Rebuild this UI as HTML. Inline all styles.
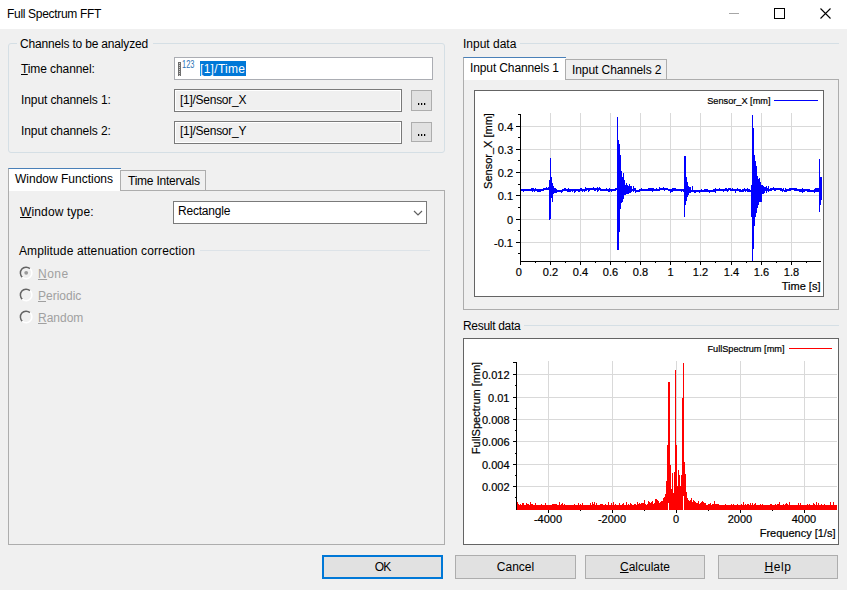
<!DOCTYPE html>
<html><head><meta charset="utf-8">
<style>
html,body{margin:0;padding:0;}
body{width:847px;height:590px;overflow:hidden;position:relative;background:#f0f0f0;font-family:"Liberation Sans",sans-serif;font-size:12px;color:#000;}
.a{position:absolute;box-sizing:border-box;}
.t{position:absolute;white-space:nowrap;font-size:12px;line-height:14px;}
.u{text-decoration:underline;text-underline-offset:1px;}
.dis{color:#a0a0a0;}
.btn{position:absolute;box-sizing:border-box;background:#e1e1e1;border:1px solid #adadad;}
.cl{font-family:"Liberation Sans",sans-serif;font-size:11px;fill:#000;stroke:#000;stroke-width:0.2px;}
.lg{font-family:"Liberation Sans",sans-serif;font-size:9.2px;fill:#000;stroke:#000;stroke-width:0.2px;}
svg{position:absolute;left:0;top:0;}
</style></head><body>
<!-- title bar -->
<div class="a" style="left:0;top:0;width:847px;height:29px;background:#fff;"></div>
<div class="t" style="left:7px;top:7px;letter-spacing:-0.31px">Full Spectrum FFT</div>
<div class="a" style="left:729px;top:13px;width:10px;height:1px;background:#a6a6a6;"></div>
<div class="a" style="left:774px;top:8px;width:11px;height:11px;border:1px solid #000;"></div>
<svg width="847" height="30" style="left:0;top:0"><path d="M820.5 8.5L830.5 18.5M830.5 8.5L820.5 18.5" stroke="#000" stroke-width="1.1" fill="none"/></svg>

<!-- group box 1 -->
<div class="a" style="left:8px;top:43px;width:437px;height:110px;border:1px solid #d5dfe5;border-radius:3px;"></div>
<div class="a" style="left:17px;top:38px;width:136px;height:10px;background:#f0f0f0;"></div>
<div class="t" style="left:20px;top:37px;letter-spacing:-0.18px">Channels to be analyzed</div>
<div class="t" style="left:21px;top:62px;letter-spacing:-0.09px"><span class="u">T</span>ime channel:</div>
<div class="t" style="left:21px;top:93px;letter-spacing:-0.1px">Input channels 1:</div>
<div class="t" style="left:21px;top:124px;letter-spacing:-0.1px">Input channels 2:</div>

<div class="a" style="left:174px;top:57px;width:259px;height:23px;background:#fff;border:1px solid #abadb3;"></div>
<div class="a" style="left:200px;top:61px;width:46px;height:15px;background:#0078d7;"></div>
<div class="t" style="left:200px;top:62px;color:#fff;letter-spacing:0.3px">[1]/Time</div>
<svg width="200" height="80" style="left:0;top:0">
<rect x="178" y="62" width="3" height="14" fill="#6e6e6e"/>
<path d="M179 63.5H180M179 65.5H180M179 67.5H180M179 69.5H180M179 71.5H180M179 73.5H180M179 75.5H180" stroke="#d0d0d0" stroke-width="1"/>
<text x="182" y="68" textLength="12.4" lengthAdjust="spacingAndGlyphs" style="font-family:'Liberation Sans';font-size:10.1px;fill:#2f74b5">123</text>
</svg>

<div class="a" style="left:174px;top:89px;width:228px;height:23px;background:#f0f0f0;border:1px solid #7a7a7a;box-shadow:inset 0 0 0 1px #fff;"></div>
<div class="t" style="left:180px;top:93px;letter-spacing:-0.27px">[1]/Sensor_X</div>
<div class="btn" style="left:411px;top:90px;width:21px;height:21px;"></div>
<div class="a" style="left:418px;top:103px;width:1px;height:2px;background:#000;box-shadow:1px 0 0 #a8a8a8;"></div>
<div class="a" style="left:421px;top:103px;width:1px;height:2px;background:#000;box-shadow:1px 0 0 #a8a8a8;"></div>
<div class="a" style="left:424px;top:103px;width:1px;height:2px;background:#000;box-shadow:1px 0 0 #a8a8a8;"></div>

<div class="a" style="left:174px;top:121px;width:228px;height:23px;background:#f0f0f0;border:1px solid #7a7a7a;box-shadow:inset 0 0 0 1px #fff;"></div>
<div class="t" style="left:180px;top:124px;letter-spacing:-0.27px">[1]/Sensor_Y</div>
<div class="btn" style="left:411px;top:122px;width:21px;height:20px;"></div>
<div class="a" style="left:418px;top:134px;width:1px;height:2px;background:#000;box-shadow:1px 0 0 #a8a8a8;"></div>
<div class="a" style="left:421px;top:134px;width:1px;height:2px;background:#000;box-shadow:1px 0 0 #a8a8a8;"></div>
<div class="a" style="left:424px;top:134px;width:1px;height:2px;background:#000;box-shadow:1px 0 0 #a8a8a8;"></div>

<!-- left tab control -->
<div class="a" style="left:8px;top:190px;width:437px;height:355px;border:1px solid #adadad;"></div>
<div class="a" style="left:8px;top:168px;width:113px;height:23px;border-left:1px solid #adadad;border-top:1px solid #4a80b8;background:#fff;"></div>
<div class="a" style="left:120px;top:170px;width:86px;height:21px;border:1px solid #adadad;background:#f0f0f0;"></div>
<div class="t" style="left:15px;top:172px;">Window Functions</div>
<div class="t" style="left:128px;top:174px;letter-spacing:-0.23px">Time Intervals</div>

<div class="t" style="left:20px;top:205px;letter-spacing:0.14px"><span class="u">W</span>indow type:</div>
<div class="a" style="left:173px;top:201px;width:254px;height:23px;background:#fff;border:1px solid #7a7a7a;"></div>
<div class="t" style="left:178px;top:204px;letter-spacing:-0.2px">Rectangle</div>
<svg width="440" height="230" style="left:0;top:0"><path d="M414 211L418 215L422 211" stroke="#606060" stroke-width="1.2" fill="none"/></svg>

<div class="t" style="left:19px;top:244px;letter-spacing:0.12px">Amplitude attenuation correction</div>
<div class="a" style="left:200px;top:250px;width:230px;height:1px;background:#dde3e8;"></div>

<svg width="40" height="340" style="left:0;top:0">
<g fill="none" stroke-width="1.5">
<path d="M22.3 277.2A5.4 5.4 0 0 1 30 268.6" stroke="#646464"/>
<path d="M30 268.6A5.4 5.4 0 0 1 22.3 277.2" stroke="#ffffff"/>
<path d="M22.3 299.2A5.4 5.4 0 0 1 30 290.6" stroke="#646464"/>
<path d="M30 290.6A5.4 5.4 0 0 1 22.3 299.2" stroke="#ffffff"/>
<path d="M22.3 321.2A5.4 5.4 0 0 1 30 312.6" stroke="#646464"/>
<path d="M30 312.6A5.4 5.4 0 0 1 22.3 321.2" stroke="#ffffff"/>
</g>
<circle cx="26.2" cy="272.8" r="1.9" fill="#9a9a9a"/>
</svg>
<div class="t dis" style="left:38px;top:267px;letter-spacing:0.5px"><span class="u">N</span>one</div>
<div class="t dis" style="left:38px;top:289px;"><span class="u">P</span>eriodic</div>
<div class="t dis" style="left:38px;top:311px;"><span class="u">R</span>andom</div>

<!-- buttons -->
<div class="btn" style="left:322px;top:555px;width:121px;height:24px;border:2px solid #0078d7;"></div>
<div class="t" style="left:322px;top:560px;width:121px;text-align:center;letter-spacing:-0.8px">OK</div>
<div class="btn" style="left:455px;top:555px;width:121px;height:24px;"></div>
<div class="t" style="left:455px;top:560px;width:121px;text-align:center;">Cancel</div>
<div class="btn" style="left:585px;top:555px;width:120px;height:24px;"></div>
<div class="t" style="left:585px;top:560px;width:120px;text-align:center;"><span class="u">C</span>alculate</div>
<div class="btn" style="left:718px;top:555px;width:120px;height:24px;"></div>
<div class="t" style="left:718px;top:560px;width:120px;text-align:center;letter-spacing:0.6px"><span class="u">H</span>elp</div>

<!-- right: input data -->
<div class="t" style="left:463px;top:37px;">Input data</div>
<div class="a" style="left:520px;top:43px;width:319px;height:1px;background:#d5dfe5;"></div>
<div class="a" style="left:463px;top:79px;width:376px;height:231px;border:1px solid #adadad;"></div>
<div class="a" style="left:463px;top:57px;width:103px;height:23px;border-left:1px solid #adadad;border-top:1px solid #4a80b8;background:#fff;"></div>
<div class="a" style="left:565px;top:59px;width:102px;height:21px;border:1px solid #adadad;background:#f0f0f0;"></div>
<div class="t" style="left:470px;top:61px;letter-spacing:-0.12px">Input Channels 1</div>
<div class="t" style="left:572px;top:63px;letter-spacing:-0.08px">Input Channels 2</div>

<div class="a" style="left:474px;top:90px;width:350px;height:207px;background:#fff;border:1px solid #646464;"></div>

<!-- result data -->
<div class="t" style="left:463px;top:319px;letter-spacing:-0.3px">Result data</div>
<div class="a" style="left:524px;top:325px;width:315px;height:1px;background:#d5dfe5;"></div>
<div class="a" style="left:463px;top:338px;width:376px;height:207px;background:#fff;border:1px solid #646464;"></div>

<svg width="847" height="590" style="left:0;top:0">
<path d="M550.5 113V261M580.5 113V261M610.5 113V261M640.5 113V261M670.5 113V261M700.5 113V261M731.5 113V261M761.5 113V261M791.5 113V261M521 126.5H821M521 149.5H821M521 172.5H821M521 195.5H821M521 219.5H821M521 242.5H821" stroke="#d9d9d9" stroke-width="1" fill="none"/>
<path d="M520.5 189V191M521.5 189V191M522.5 189V191M523.5 189V192M524.5 189V191M525.5 189V191M526.5 189V191M527.5 189V191M528.5 189V191M529.5 189V191M530.5 189V191M531.5 188V191M532.5 188V192M533.5 188V191M534.5 189V192M535.5 188V191M536.5 189V191M537.5 189V192M538.5 189V192M539.5 189V192M540.5 189V192M541.5 189V191M542.5 189V191M543.5 188V191M544.5 188V190M545.5 188V190M546.5 187V190M547.5 188V190M548.5 187V190M549.5 180V220M550.5 158V219M551.5 177V198M552.5 183V202M553.5 186V194M554.5 188V193M555.5 188V193M556.5 189V193M557.5 190V192M558.5 190V192M559.5 190V192M560.5 190V192M561.5 190V193M562.5 189V192M563.5 189V191M564.5 188V191M565.5 188V191M566.5 189V191M567.5 189V192M568.5 188V192M569.5 189V192M570.5 189V192M571.5 189V191M572.5 189V192M573.5 189V191M574.5 189V193M575.5 189V192M576.5 189V191M577.5 189V191M578.5 189V192M579.5 189V192M580.5 188V191M581.5 188V191M582.5 189V192M583.5 189V191M584.5 189V192M585.5 187V191M586.5 188V191M587.5 188V190M588.5 188V192M589.5 188V191M590.5 188V190M591.5 188V190M592.5 188V190M593.5 187V190M594.5 188V191M595.5 188V191M596.5 188V190M597.5 187V192M598.5 188V191M599.5 187V190M600.5 188V191M601.5 189V191M602.5 189V191M603.5 189V191M604.5 189V191M605.5 189V191M606.5 188V191M607.5 189V191M608.5 189V192M609.5 188V192M610.5 189V191M611.5 189V192M612.5 189V191M613.5 189V191M614.5 189V191M615.5 188V191M616.5 188V190M617.5 117V250M618.5 140V250M619.5 144V232M620.5 155V209M621.5 171V203M622.5 177V202M623.5 173V199M624.5 180V195M625.5 185V195M626.5 183V194M627.5 185V194M628.5 186V194M629.5 184V193M630.5 186V193M631.5 186V192M632.5 189V191M633.5 186V192M634.5 188V191M635.5 188V193M636.5 190V192M637.5 190V192M638.5 190V192M639.5 189V192M640.5 189V191M641.5 188V191M642.5 189V191M643.5 189V191M644.5 189V191M645.5 189V191M646.5 189V191M647.5 189V191M648.5 188V191M649.5 188V191M650.5 188V191M651.5 188V191M652.5 188V192M653.5 188V191M654.5 189V191M655.5 189V191M656.5 188V191M657.5 189V191M658.5 189V191M659.5 187V191M660.5 188V190M661.5 188V190M662.5 188V190M663.5 187V190M664.5 188V191M665.5 188V190M666.5 188V190M667.5 188V190M668.5 189V191M669.5 189V191M670.5 189V193M671.5 189V192M672.5 188V192M673.5 188V191M674.5 188V191M675.5 188V191M676.5 189V191M677.5 189V191M678.5 189V191M679.5 189V191M680.5 189V191M681.5 189V192M682.5 189V191M683.5 189V192M684.5 156V217M685.5 156V205M686.5 177V201M687.5 182V197M688.5 186V195M689.5 187V193M690.5 187V193M691.5 190V192M692.5 186V192M693.5 190V192M694.5 190V193M695.5 190V193M696.5 190V192M697.5 190V192M698.5 190V192M699.5 190V193M700.5 190V192M701.5 189V192M702.5 190V192M703.5 190V192M704.5 189V192M705.5 189V192M706.5 189V192M707.5 189V192M708.5 190V192M709.5 190V193M710.5 190V192M711.5 190V192M712.5 190V192M713.5 189V192M714.5 189V192M715.5 188V193M716.5 189V191M717.5 189V191M718.5 189V191M719.5 188V191M720.5 189V191M721.5 189V191M722.5 189V191M723.5 189V192M724.5 189V191M725.5 188V191M726.5 188V191M727.5 189V192M728.5 188V191M729.5 188V190M730.5 188V191M731.5 189V191M732.5 188V191M733.5 189V191M734.5 189V191M735.5 189V193M736.5 189V191M737.5 188V191M738.5 189V191M739.5 189V192M740.5 189V192M741.5 190V192M742.5 189V192M743.5 189V192M744.5 188V191M745.5 189V192M746.5 189V191M747.5 188V192M748.5 189V192M749.5 189V192M750.5 190V192M751.5 185V217M752.5 115V261M753.5 128V249M754.5 155V226M755.5 161V217M756.5 166V213M757.5 176V208M758.5 179V205M759.5 178V202M760.5 182V202M761.5 185V202M762.5 185V194M763.5 186V194M764.5 187V193M765.5 187V191M766.5 186V193M767.5 188V191M768.5 186V192M769.5 189V191M770.5 188V191M771.5 188V191M772.5 188V190M773.5 187V190M774.5 188V191M775.5 188V191M776.5 188V190M777.5 188V190M778.5 188V190M779.5 188V190M780.5 188V191M781.5 188V191M782.5 189V192M783.5 188V191M784.5 190V192M785.5 188V192M786.5 189V192M787.5 189V191M788.5 189V191M789.5 188V191M790.5 188V191M791.5 188V190M792.5 188V190M793.5 188V190M794.5 188V191M795.5 188V191M796.5 188V191M797.5 189V191M798.5 189V191M799.5 189V192M800.5 189V192M801.5 189V192M802.5 188V193M803.5 189V192M804.5 189V192M805.5 189V191M806.5 189V191M807.5 189V192M808.5 189V192M809.5 189V192M810.5 190V192M811.5 190V192M812.5 190V192M813.5 190V192M814.5 189V193M815.5 188V192M816.5 188V192M817.5 188V192M818.5 188V192M819.5 159V212M820.5 177V205M821.5 177V200" stroke="#0000ff" stroke-width="1" fill="none"/>
<path d="M520.5 114V264M518 114.5H520M520 261.5H821M516 126.5H520M516 149.5H520M516 172.5H520M516 195.5H520M516 219.5H520M516 242.5H520M518 137.5H520M518 160.5H520M518 184.5H520M518 207.5H520M518 230.5H520M518 253.5H520M520.5 262V265M550.5 262V265M580.5 262V265M610.5 262V265M640.5 262V265M670.5 262V265M700.5 262V265M731.5 262V265M761.5 262V265M791.5 262V265M535.5 262V263M565.5 262V263M595.5 262V263M625.5 262V263M655.5 262V263M685.5 262V263M715.5 262V263M746.5 262V263M776.5 262V263M806.5 262V263" stroke="#000" stroke-width="1" fill="none"/>
<text x="513" y="131" text-anchor="end" class="cl">0.4</text>
<text x="513" y="154" text-anchor="end" class="cl">0.3</text>
<text x="513" y="177" text-anchor="end" class="cl">0.2</text>
<text x="513" y="200" text-anchor="end" class="cl">0.1</text>
<text x="513" y="224" text-anchor="end" class="cl">0</text>
<text x="513" y="247" text-anchor="end" class="cl">-0.1</text>
<text x="518.8" y="276" text-anchor="middle" class="cl">0</text>
<text x="550.5" y="276" text-anchor="middle" class="cl">0.2</text>
<text x="580.5" y="276" text-anchor="middle" class="cl">0.4</text>
<text x="610.5" y="276" text-anchor="middle" class="cl">0.6</text>
<text x="640.5" y="276" text-anchor="middle" class="cl">0.8</text>
<text x="670.5" y="276" text-anchor="middle" class="cl">1</text>
<text x="700.5" y="276" text-anchor="middle" class="cl">1.2</text>
<text x="731.5" y="276" text-anchor="middle" class="cl">1.4</text>
<text x="761.5" y="276" text-anchor="middle" class="cl">1.6</text>
<text x="791.5" y="276" text-anchor="middle" class="cl">1.8</text>
<text x="820.5" y="290" text-anchor="end" class="cl">Time [s]</text>
<text transform="translate(491.5 151) rotate(-90)" text-anchor="middle" class="cl">Sensor_X [mm]</text>
<text x="770.5" y="104" text-anchor="end" class="lg">Sensor_X [mm]</text>
<path d="M774 100.5H818" stroke="#0000ff" stroke-width="1"/>
<path d="M548.5 361V509M612.5 361V509M676.5 361V509M740.5 361V509M804.5 361V509M517 374.5H837M517 397.5H837M517 419.5H837M517 441.5H837M517 464.5H837M517 486.5H837" stroke="#d9d9d9" stroke-width="1" fill="none"/>
<path d="M516.5 362V510M513 362.5H516M516 509.5H836M513 374.5H516M513 397.5H516M513 419.5H516M513 441.5H516M513 464.5H516M513 486.5H516M515 385.5H516M515 408.5H516M515 430.5H516M515 453.5H516M515 475.5H516M515 497.5H516M548.5 510V513M612.5 510V513M676.5 510V513M740.5 510V513M804.5 510V513M580.5 510V511M644.5 510V511M708.5 510V511M772.5 510V511" stroke="#000" stroke-width="1" fill="none"/>
<path d="M517.5 502V510M518.5 504V510M519.5 505V510M520.5 504V510M521.5 505V510M522.5 503V510M523.5 503V510M524.5 505V510M525.5 505V510M526.5 503V510M527.5 504V510M528.5 504V510M529.5 505V510M530.5 502V510M531.5 504V510M532.5 504V510M533.5 505V510M534.5 505V510M535.5 503V510M536.5 505V510M537.5 505V510M538.5 505V510M539.5 505V510M540.5 505V510M541.5 504V510M542.5 505V510M543.5 505V510M544.5 505V510M545.5 503V510M546.5 505V510M547.5 505V510M548.5 505V510M549.5 505V510M550.5 505V510M551.5 505V510M552.5 504V510M553.5 504V510M554.5 504V510M555.5 504V510M556.5 504V510M557.5 505V510M558.5 505V510M559.5 502V510M560.5 505V510M561.5 504V510M562.5 503V510M563.5 505V510M564.5 504V510M565.5 505V510M566.5 505V510M567.5 505V510M568.5 505V510M569.5 505V510M570.5 505V510M571.5 505V510M572.5 505V510M573.5 505V510M574.5 504V510M575.5 505V510M576.5 505V510M577.5 505V510M578.5 503V510M579.5 505V510M580.5 504V510M581.5 505V510M582.5 503V510M583.5 505V510M584.5 505V510M585.5 505V510M586.5 505V510M587.5 505V510M588.5 505V510M589.5 505V510M590.5 503V510M591.5 505V510M592.5 502V510M593.5 504V510M594.5 502V510M595.5 505V510M596.5 503V510M597.5 505V510M598.5 505V510M599.5 505V510M600.5 504V510M601.5 504V510M602.5 504V510M603.5 505V510M604.5 505V510M605.5 504V510M606.5 505V510M607.5 505V510M608.5 502V510M609.5 505V510M610.5 505V510M611.5 503V510M612.5 505V510M613.5 502V510M614.5 505V510M615.5 504V510M616.5 505V510M617.5 505V510M618.5 505V510M619.5 503V510M620.5 505V510M621.5 505V510M622.5 504V510M623.5 503V510M624.5 505V510M625.5 505V510M626.5 502V510M627.5 505V510M628.5 504V510M629.5 505V510M630.5 503V510M631.5 504V510M632.5 505V510M633.5 505V510M634.5 504V510M635.5 504V510M636.5 505V510M637.5 502V510M638.5 504V510M639.5 503V510M640.5 504V510M641.5 503V510M642.5 503V510M643.5 503V510M644.5 500V510M645.5 504V510M646.5 505V510M647.5 504V510M648.5 501V510M649.5 502V510M650.5 503V510M651.5 502V510M652.5 501V510M653.5 504V510M654.5 503V510M655.5 499V510M656.5 499V510M657.5 500V510M658.5 501V510M659.5 503V510M660.5 502V510M661.5 501V510M662.5 501V510M663.5 498V510M664.5 497V510M665.5 494V510M666.5 481V510M667.5 445V510M668.5 382V510M669.5 382V510M670.5 465V510M671.5 489V510M672.5 473V510M673.5 493V510M674.5 472V510M675.5 370V510M676.5 445V510M677.5 486V510M678.5 470V510M679.5 475V510M680.5 486V510M681.5 475V510M682.5 398V510M683.5 363V510M684.5 462V510M685.5 474V510M686.5 492V510M687.5 498V510M688.5 500V510M689.5 501V510M690.5 500V510M691.5 498V510M692.5 502V510M693.5 500V510M694.5 501V510M695.5 502V510M696.5 503V510M697.5 503V510M698.5 501V510M699.5 504V510M700.5 503V510M701.5 502V510M702.5 501V510M703.5 502V510M704.5 503V510M705.5 503V510M706.5 505V510M707.5 505V510M708.5 504V510M709.5 504V510M710.5 503V510M711.5 505V510M712.5 504V510M713.5 504V510M714.5 501V510M715.5 504V510M716.5 504V510M717.5 504V510M718.5 504V510M719.5 505V510M720.5 505V510M721.5 505V510M722.5 505V510M723.5 505V510M724.5 505V510M725.5 504V510M726.5 505V510M727.5 505V510M728.5 505V510M729.5 505V510M730.5 505V510M731.5 504V510M732.5 505V510M733.5 504V510M734.5 505V510M735.5 505V510M736.5 505V510M737.5 504V510M738.5 505V510M739.5 505V510M740.5 505V510M741.5 504V510M742.5 505V510M743.5 502V510M744.5 505V510M745.5 504V510M746.5 505V510M747.5 504V510M748.5 504V510M749.5 505V510M750.5 503V510M751.5 505V510M752.5 503V510M753.5 505V510M754.5 504V510M755.5 503V510M756.5 505V510M757.5 505V510M758.5 505V510M759.5 505V510M760.5 504V510M761.5 505V510M762.5 504V510M763.5 505V510M764.5 505V510M765.5 505V510M766.5 505V510M767.5 505V510M768.5 505V510M769.5 505V510M770.5 504V510M771.5 504V510M772.5 505V510M773.5 505V510M774.5 505V510M775.5 504V510M776.5 505V510M777.5 504V510M778.5 504V510M779.5 502V510M780.5 505V510M781.5 505V510M782.5 505V510M783.5 504V510M784.5 505V510M785.5 504V510M786.5 503V510M787.5 504V510M788.5 505V510M789.5 502V510M790.5 505V510M791.5 505V510M792.5 505V510M793.5 505V510M794.5 505V510M795.5 505V510M796.5 505V510M797.5 505V510M798.5 503V510M799.5 505V510M800.5 503V510M801.5 505V510M802.5 505V510M803.5 505V510M804.5 505V510M805.5 505V510M806.5 505V510M807.5 504V510M808.5 505V510M809.5 504V510M810.5 505V510M811.5 505V510M812.5 505V510M813.5 503V510M814.5 504V510M815.5 505V510M816.5 502V510M817.5 505V510M818.5 503V510M819.5 505V510M820.5 505V510M821.5 504V510M822.5 505V510M823.5 505V510M824.5 504V510M825.5 505V510M826.5 505V510M827.5 505V510M828.5 505V510M829.5 505V510M830.5 502V510M831.5 505V510M832.5 505V510M833.5 502V510M834.5 505V510M835.5 505V510M836.5 505V510" stroke="#ff0000" stroke-width="1" fill="none"/>
<path d="M668.5 503V510M683.5 496V510" stroke="#ffffff" stroke-width="1" fill="none"/>
<text x="509.5" y="379" text-anchor="end" class="cl">0.012</text>
<text x="509.5" y="402" text-anchor="end" class="cl">0.01</text>
<text x="509.5" y="424" text-anchor="end" class="cl">0.008</text>
<text x="509.5" y="446" text-anchor="end" class="cl">0.006</text>
<text x="509.5" y="469" text-anchor="end" class="cl">0.004</text>
<text x="509.5" y="491" text-anchor="end" class="cl">0.002</text>
<text x="548" y="523" text-anchor="middle" class="cl">-4000</text>
<text x="612" y="523" text-anchor="middle" class="cl">-2000</text>
<text x="676" y="523" text-anchor="middle" class="cl">0</text>
<text x="740" y="523" text-anchor="middle" class="cl">2000</text>
<text x="804" y="523" text-anchor="middle" class="cl">4000</text>
<text x="835.5" y="537" text-anchor="end" class="cl">Frequency [1/s]</text>
<text transform="translate(480 408) rotate(-90)" text-anchor="middle" class="cl">FullSpectrum [mm]</text>
<text x="784.5" y="352" text-anchor="end" class="lg">FullSpectrum [mm]</text>
<path d="M789 348.5H832" stroke="#ff0000" stroke-width="1"/>
</svg>
</body></html>
